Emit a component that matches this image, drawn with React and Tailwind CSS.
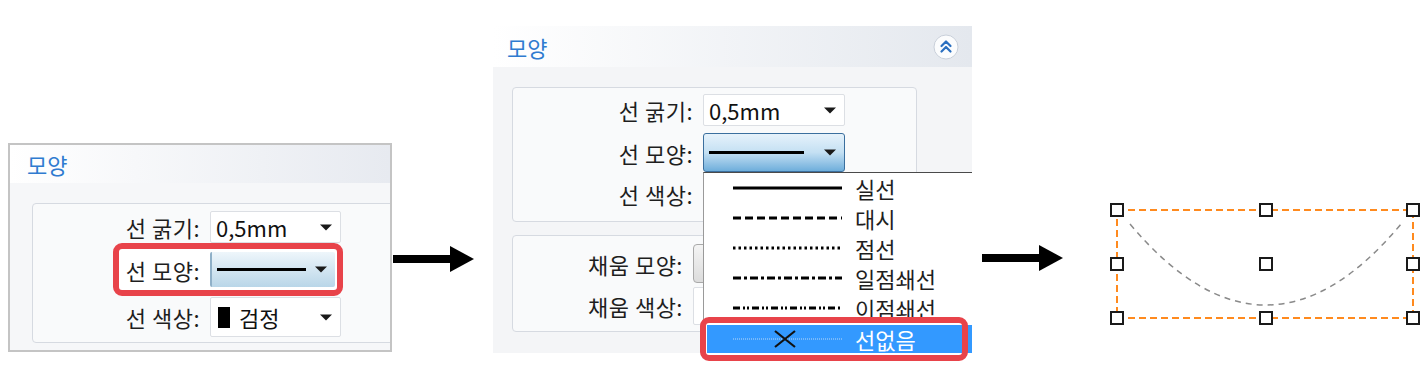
import React from 'react'

const LABEL = 'text-[22px] leading-none text-[#1e1e1e] tracking-[0.5px] whitespace-nowrap text-right'
const ITEM_TEXT = 'text-[22px] leading-none whitespace-nowrap'
const VALUE = 'text-[22px] leading-none text-[#111]'

function Caret() {
  return (
    <svg width="12" height="7" viewBox="0 0 12 7" className="shrink-0">
      <path d="M0 0.5 L12 0.5 L6 6.5 Z" fill="#1a1a1a" />
    </svg>
  )
}

function Combo({ className = '', children }) {
  return (
    <div className={`flex items-center justify-between pl-[5px] pr-[8px] rounded-[2px] ${className}`}>
      <div className="flex items-center gap-[9px]">{children}</div>
      <Caret />
    </div>
  )
}

function SolidLine({ w = 90 }) {
  return <div className="h-[3px] bg-black" style={{ width: w }} />
}

const lineStyles = [
  { name: '실선', dash: null },
  { name: '대시', dash: '8 4' },
  { name: '점선', dash: '2.5 3' },
  { name: '일점쇄선', dash: '8 3 3 3' },
  { name: '이점쇄선', dash: '7 3 2 2 2 3' },
]

function LineSample({ dash }) {
  return (
    <svg width="109" height="6" viewBox="0 0 109 6" className="shrink-0">
      <line x1="0" y1="3" x2="109" y2="3" stroke="#000" strokeWidth="3" strokeDasharray={dash || undefined} />
    </svg>
  )
}

function Arrow({ w, h = 28 }) {
  return (
    <svg width={w} height={h} viewBox={`0 0 ${w} ${h}`} className="shrink-0">
      <rect x="0" y={h / 2 - 4} width={w - 23} height="8" fill="#000" />
      <path d={`M${w - 24} 1 L${w} ${h / 2} L${w - 24} ${h - 1} Z`} fill="#000" />
    </svg>
  )
}

export default function App() {
  const hx = [1117, 1266, 1413]
  const hy = [210, 264, 318]
  const handles = []
  hx.forEach(x => hy.forEach(y => handles.push([x, y])))

  return (
    <div className="relative w-[1428px] h-[368px] bg-white overflow-hidden flex items-start font-['Noto_Sans_CJK_KR',sans-serif]">
      {/* Panel 1 */}
      <div className="ml-[8px] mt-[143px] w-[384px] h-[209px] shrink-0 border-2 border-[#c4c4c4] bg-[#f6f7f9] overflow-hidden flex flex-col">
        <div className="h-[38px] shrink-0 bg-gradient-to-r from-white to-[#e7eaf0] flex items-center pl-[17px]">
          <span className="text-[22px] leading-none text-[#2f7bd0]">모양</span>
        </div>
        <div className="pl-[22px] pt-[20px]">
          <div className="relative h-[140px] -mr-[12px] border border-[#d6dae1] rounded-[4px] bg-[#f9fafb]">
            <div className="absolute left-[80px] top-[39px] w-[230px] h-[53px] border-[6px] border-[#e8434a] rounded-[9px] bg-white" />
            <div className="relative z-10 flex flex-col pt-[7px]">
              <div className="flex items-center h-[32px]">
                <span className={`${LABEL} w-[167px]`}>선 굵기:</span>
                <Combo className="ml-[10px] w-[131px] h-full bg-white border border-[#dcdfe4]">
                  <span className={VALUE}>0,5mm</span>
                </Combo>
              </div>
              <div className="flex items-center h-[35px] mt-[9px]">
                <span className={`${LABEL} w-[167px]`}>선 모양:</span>
                <Combo className="ml-[10px] w-[125px] h-full bg-gradient-to-b from-[#eef6fb] to-[#b9d6e8] border-l-2 border-[#8fb0c8]">
                  <SolidLine w={89} />
                </Combo>
              </div>
              <div className="flex items-center h-[40px] mt-[10px]">
                <span className={`${LABEL} w-[167px]`}>선 색상:</span>
                <Combo className="ml-[10px] w-[131px] h-full bg-white border border-[#dcdfe4]">
                  <span className="ml-[2px] w-[12px] h-[21px] bg-black" />
                  <span className={VALUE}>검정</span>
                </Combo>
              </div>
            </div>
          </div>
        </div>
      </div>

      {/* Arrow 1 */}
      <div className="ml-[1px] mt-[245px]">
        <Arrow w={81} />
      </div>

      {/* Panel 2 */}
      <div className="relative ml-[19px] mt-[26px] w-[479px] h-[327px] shrink-0 bg-[#f4f5f7] flex flex-col">
        <div className="h-[41px] shrink-0 bg-gradient-to-r from-white to-[#e4e8ee] flex items-center justify-between pl-[14px] pr-[13px]">
          <span className="text-[22px] leading-none text-[#2f7bd0]">모양</span>
          <svg width="26" height="26" viewBox="0 0 26 26">
            <circle cx="13" cy="13" r="12" fill="#fbfcfd" stroke="#c9d0da" strokeWidth="1" />
            <path d="M8.5 12 L13 7.5 L17.5 12 M8.5 17.5 L13 13 L17.5 17.5" fill="none" stroke="#2a6fc0" strokeWidth="2.2" strokeLinecap="round" strokeLinejoin="round" />
          </svg>
        </div>
        <div className="pl-[19px] pt-[20px] flex flex-col">
          <div className="w-[405px] h-[135px] border border-[#d6dae1] rounded-[4px] bg-[#f9fafb] flex flex-col pt-[6px]">
            <div className="flex items-center h-[32px]">
              <span className={`${LABEL} w-[180px]`}>선 굵기:</span>
              <Combo className="ml-[10px] w-[142px] h-full bg-white border border-[#dcdfe4]">
                <span className={VALUE}>0,5mm</span>
              </Combo>
            </div>
            <div className="flex items-center h-[39px] mt-[7px]">
              <span className={`${LABEL} w-[180px]`}>선 모양:</span>
              <Combo className="ml-[10px] w-[142px] h-full bg-gradient-to-b from-[#e6f2fb] via-[#c4e0f3] to-[#6eaedb] border border-[#3b6f9e] rounded-[3px]">
                <SolidLine w={95} />
              </Combo>
            </div>
            <div className="flex items-center h-[32px] mt-[6px]">
              <span className={`${LABEL} w-[180px]`}>선 색상:</span>
            </div>
          </div>
          <div className="mt-[13px] w-[405px] h-[97px] border border-[#d6dae1] rounded-[4px] bg-[#f9fafb] flex flex-col pt-[8px]">
            <div className="flex items-center h-[39px]">
              <span className={`${LABEL} w-[170px]`}>채움 모양:</span>
              <div className="ml-[10px] w-[60px] h-full rounded-[4px] border border-[#a9a9a9] bg-gradient-to-b from-[#f4f4f4] to-[#dcdcdc]" />
            </div>
            <div className="flex items-center h-[38px] mt-[4px]">
              <span className={`${LABEL} w-[170px]`}>채움 색상:</span>
              <div className="ml-[10px] w-[60px] h-full rounded-[2px] border border-[#dcdfe4] bg-white" />
            </div>
          </div>
        </div>

        {/* Dropdown list */}
        <div className="absolute left-[210px] top-[146px] w-[269px] h-[181px] bg-white border-t border-l border-t-[#4a4a4a] border-l-[#9a9a9a] flex flex-col">
          {lineStyles.map(s => (
            <div key={s.name} className="h-[30px] flex items-center pl-[29px] gap-[13px] text-[#1e1e1e]">
              <LineSample dash={s.dash} />
              <span className={ITEM_TEXT}>{s.name}</span>
            </div>
          ))}
          <div className="h-[30px] flex items-center">
            <div className="ml-[3px] mt-[2px] h-[28px] flex-1 bg-[#3399ff] flex items-center pl-[26px] gap-[13px] text-white">
              <svg width="109" height="22" viewBox="0 0 109 22" className="shrink-0">
                <line x1="0" y1="11" x2="109" y2="11" stroke="#bcd9f7" strokeWidth="1" strokeDasharray="1 1" />
                <path d="M42 3 L62 19 M62 3 L42 19" stroke="#111" strokeWidth="2.2" />
              </svg>
              <span className={ITEM_TEXT}>선없음</span>
            </div>
          </div>
        </div>
      </div>

      {/* Red highlight on list item */}
      <div className="absolute left-[700px] top-[317px] w-[268px] h-[44px] border-[6px] border-[#e8434a] rounded-[9px] z-20" />

      {/* Arrow 2 */}
      <div className="ml-[10px] mt-[244px]">
        <Arrow w={81} />
      </div>

      {/* Canvas with selected shape */}
      <svg width="340" height="368" viewBox="1088 0 340 368" className="ml-[25px] shrink-0">
        <rect x="1117" y="210" width="296" height="108" fill="none" stroke="#ff8a1e" strokeWidth="2" strokeDasharray="7 4" />
        <path d="M1130 224 Q1266 386 1401 224" fill="none" stroke="#8a8a8a" strokeWidth="1.5" strokeDasharray="6 5" />
        {handles.map(([x, y]) => (
          <rect key={`${x}-${y}`} x={x - 6} y={y - 6} width="12" height="12" fill="#fff" stroke="#1a1a1a" strokeWidth="2" />
        ))}
      </svg>
    </div>
  )
}
